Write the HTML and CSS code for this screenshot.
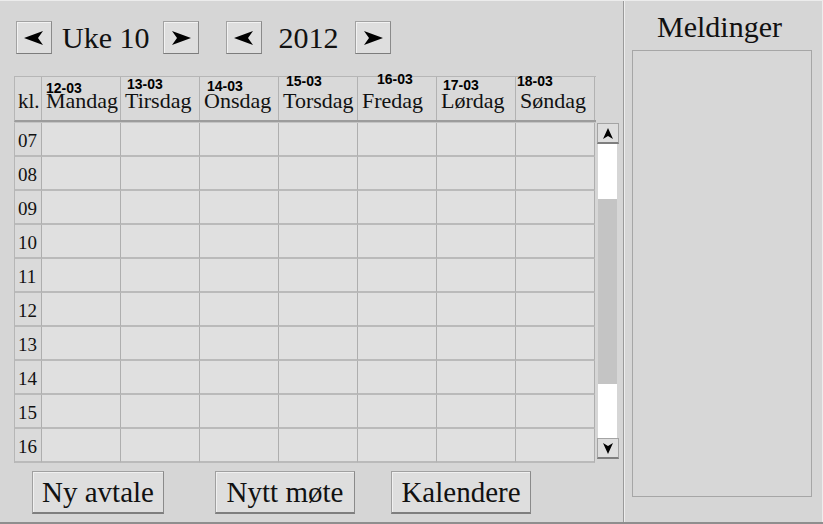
FILE: index.html
```html
<!DOCTYPE html>
<html lang="no">
<head>
<meta charset="utf-8">
<title>Kalender</title>
<link rel="stylesheet" href="styles.css">
</head>
<body>
<div class="app">
  <section class="left">
    <div class="nav">
      <button class="arrow-btn"><svg width="20" height="14" viewBox="0 0 20 14"><path d="M0 7 L19 0 L14 7 L19 14 Z" fill="#000"/></svg></button>
      <span class="nav-label week">Uke 10</span>
      <button class="arrow-btn"><svg width="20" height="14" viewBox="0 0 20 14"><path d="M20 7 L1 0 L6 7 L1 14 Z" fill="#000"/></svg></button>
      <button class="arrow-btn group2"><svg width="20" height="14" viewBox="0 0 20 14"><path d="M0 7 L19 0 L14 7 L19 14 Z" fill="#000"/></svg></button>
      <span class="nav-label year">2012</span>
      <button class="arrow-btn"><svg width="20" height="14" viewBox="0 0 20 14"><path d="M20 7 L1 0 L6 7 L1 14 Z" fill="#000"/></svg></button>
    </div>

    <div class="table">
      <div class="thead">
        <div class="th kl">kl.</div>
        <div class="th"><span class="date d1">12-03</span>Mandag</div>
        <div class="th"><span class="date d2">13-03</span>Tirsdag</div>
        <div class="th"><span class="date d3">14-03</span>Onsdag</div>
        <div class="th"><span class="date d4">15-03</span>Torsdag</div>
        <div class="th"><span class="date d5">16-03</span>Fredag</div>
        <div class="th"><span class="date d6">17-03</span>Lørdag</div>
        <div class="th"><span class="date d7">18-03</span>Søndag</div>
      </div>
      <div class="tbody-wrap">
        <div class="tbody">
          <div class="hr">07</div><div class="td"></div><div class="td"></div><div class="td"></div><div class="td"></div><div class="td"></div><div class="td"></div><div class="td"></div>
          <div class="hr">08</div><div class="td"></div><div class="td"></div><div class="td"></div><div class="td"></div><div class="td"></div><div class="td"></div><div class="td"></div>
          <div class="hr">09</div><div class="td"></div><div class="td"></div><div class="td"></div><div class="td"></div><div class="td"></div><div class="td"></div><div class="td"></div>
          <div class="hr">10</div><div class="td"></div><div class="td"></div><div class="td"></div><div class="td"></div><div class="td"></div><div class="td"></div><div class="td"></div>
          <div class="hr">11</div><div class="td"></div><div class="td"></div><div class="td"></div><div class="td"></div><div class="td"></div><div class="td"></div><div class="td"></div>
          <div class="hr">12</div><div class="td"></div><div class="td"></div><div class="td"></div><div class="td"></div><div class="td"></div><div class="td"></div><div class="td"></div>
          <div class="hr">13</div><div class="td"></div><div class="td"></div><div class="td"></div><div class="td"></div><div class="td"></div><div class="td"></div><div class="td"></div>
          <div class="hr">14</div><div class="td"></div><div class="td"></div><div class="td"></div><div class="td"></div><div class="td"></div><div class="td"></div><div class="td"></div>
          <div class="hr">15</div><div class="td"></div><div class="td"></div><div class="td"></div><div class="td"></div><div class="td"></div><div class="td"></div><div class="td"></div>
          <div class="hr">16</div><div class="td"></div><div class="td"></div><div class="td"></div><div class="td"></div><div class="td"></div><div class="td"></div><div class="td"></div>
        </div>
        <div class="scrollbar">
          <div class="sb-btn"><svg width="10" height="11" viewBox="0 0 10 11"><path d="M5 0 L10 11 L5 8 L0 11 Z" fill="#000"/></svg></div>
          <div class="sb-track">
            <div class="sb-space top"></div>
            <div class="sb-thumb"></div>
            <div class="sb-space bottom"></div>
          </div>
          <div class="sb-btn"><svg width="10" height="11" viewBox="0 0 10 11"><path d="M5 11 L10 0 L5 3 L0 0 Z" fill="#000"/></svg></div>
        </div>
      </div>
    </div>

    <div class="actions">
      <button class="act b1">Ny avtale</button>
      <button class="act b2">Nytt møte</button>
      <button class="act b3">Kalendere</button>
    </div>
  </section>

  <aside class="right">
    <h2 class="title">Meldinger</h2>
    <div class="messages"></div>
  </aside>
</div>
</body>
</html>
```

FILE: styles.css
```css
* { box-sizing: border-box; }

html, body {
  margin: 0;
  padding: 0;
  background: #d6d6d6;
}

body {
  width: 823px;
  height: 524px;
  overflow: hidden;
  font-family: "Liberation Serif", "Times New Roman", serif;
  color: #111;
}

.app {
  display: flex;
  width: 823px;
  height: 524px;
  border-top: 1px solid #ececec;
  border-bottom: 2px solid #8e8e8e;
}

.left {
  width: 624px;
  flex-shrink: 0;
  border-right: 1px solid #9a9a9a;
  display: flex;
  flex-direction: column;
}

.right {
  flex: 1;
  border-left: 1px solid #ededed;
  border-right: 1px solid #ededed;
  display: flex;
  flex-direction: column;
}

/* ---------- navigation ---------- */
.nav {
  display: flex;
  align-items: center;
  height: 33px;
  margin-top: 20px;
  padding-left: 16px;
}

.arrow-btn {
  width: 36px;
  height: 33px;
  padding: 0;
  display: flex;
  align-items: center;
  justify-content: center;
  background: #dedede;
  border: 1px solid #a2a2a2;
  border-bottom-color: #7c7c7c;
  border-right-color: #8a8a8a;
  box-shadow: inset 1px 1px 0 #f2f2f2;
}

.arrow-btn.group2 { margin-left: 27px; }

.nav-label {
  font-size: 30px;
  line-height: 33px;
  color: #111;
}

.nav-label.week { margin: 0 14px 0 10px; }
.nav-label.year { margin: 0 17px 0 16px; }

/* ---------- table ---------- */
.table {
  margin-top: 22px;
  margin-left: 14px;
  width: 605px;
}

.thead {
  display: grid;
  grid-template-columns: 27px repeat(7, 79px);
  width: 582px;
  height: 46px;
  border-top: 1px solid #b6b6b6;
  border-left: 1px solid #b6b6b6;
  border-bottom: 2px solid #9c9c9c;
  box-shadow: 0 1px 0 #c4c4c4;
}

.th {
  position: relative;
  height: 43px;
  background: #d9d9d9;
  border-right: 1px solid #b2b2b2;
  font-size: 22px;
  line-height: 22px;
  padding: 13px 0 0 4px;
  white-space: nowrap;
  overflow: visible;
}

.th.kl {
  padding-left: 3px;
  font-size: 21px;
}

.date {
  position: absolute;
  font-family: "Liberation Sans", Arial, sans-serif;
  font-weight: bold;
  font-size: 14px;
  line-height: 14px;
  color: #000;
  z-index: 2;
}

.d1 { left: 4px;  top: 4px; }
.d2 { left: 6px;  top: 0px; }
.d3 { left: 7px;  top: 2px; }
.d4 { left: 7px;  top: -3px; }
.d5 { left: 19px; top: -5px; }
.d6 { left: 6px;  top: 1px; }
.d7 { left: 1px;  top: -3px; }

.tbody-wrap {
  display: flex;
  align-items: flex-start;
  margin-top: 1px;
}

.tbody {
  display: grid;
  grid-template-columns: 27px repeat(7, 79px);
  grid-auto-rows: 34px;
  width: 580px;
  flex-shrink: 0;
  border-left: 1px solid #b6b6b6;
}

.hr,
.td {
  border-right: 1px solid #aeaeae;
  border-bottom: 2px solid #bababa;
}

.td { background: #e0e0e0; }

.hr {
  background: #dadada;
  font-family: "Liberation Serif", serif;
  font-size: 19px;
  line-height: 36px;
  padding-left: 3px;
  color: #111;
}

/* ---------- scrollbar ---------- */
.scrollbar {
  width: 22px;
  flex-shrink: 0;
  height: 336px;
  margin-left: 3px;
  display: flex;
  flex-direction: column;
}

.sb-btn {
  height: 21px;
  display: flex;
  align-items: center;
  justify-content: center;
  background: #dedede;
  border: 1px solid #a4a4a4;
  border-bottom: 2px solid #7e7e7e;
}

.sb-track {
  flex: 1;
  display: flex;
  flex-direction: column;
  padding: 0 2px 0 1px;
}

.sb-space { background: #ffffff; }
.sb-space.top { height: 55px; }
.sb-space.bottom { flex: 1; }

.sb-thumb {
  height: 185px;
  background: #c4c4c4;
}

/* ---------- actions ---------- */
.actions {
  display: flex;
  margin-top: 8px;
}

.act {
  height: 43px;
  padding: 0;
  font-family: "Liberation Serif", "Times New Roman", serif;
  font-size: 29px;
  color: #111;
  background: #dedede;
  border: 1px solid #a0a0a0;
  border-bottom: 2px solid #7e7e7e;
  border-right-color: #8a8a8a;
  box-shadow: inset 1px 1px 0 #f0f0f0;
}

.b1 { width: 132px; margin-left: 32px; }
.b2 { width: 140px; margin-left: 51px; }
.b3 { width: 140px; margin-left: 36px; }

/* ---------- messages ---------- */
.title {
  margin: 8px 0 0;
  padding-right: 8px;
  height: 41px;
  font-weight: normal;
  font-size: 30px;
  line-height: 36px;
  text-align: center;
  color: #111;
}

.messages {
  margin: 0 10px 0 7px;
  height: 447px;
  border: 1px solid #a6a6a6;
  background: #d7d7d7;
}
```
